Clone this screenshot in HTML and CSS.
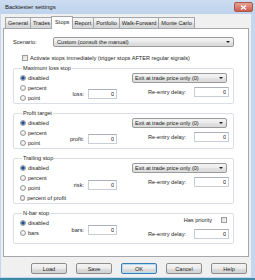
FILE: index.html
```html
<!DOCTYPE html>
<html lang="en">
<head>
    <meta charset="UTF-8">
    <meta name="viewport" content="width=device-width, initial-scale=1.0">
    <title>Backtester settings</title>
    <link rel="stylesheet" href="styles.css">
</head>
<body>
    <div class="window">
        <div class="titlebar">
            <span class="title">Backtester settings</span>
            <span class="close">
                <svg width="7" height="5" viewBox="0 0 7 5"><path d="M1 0.5 L6 4.5 M6 0.5 L1 4.5" stroke="#fff" stroke-width="1.3"/></svg>
            </span>
        </div>

        <div class="client">
            <div class="tabs">
                <span class="tab">General</span>
                <span class="tab">Trades</span>
                <span class="tab active">Stops</span>
                <span class="tab">Report</span>
                <span class="tab">Portfolio</span>
                <span class="tab">Walk-Forward</span>
                <span class="tab">Monte Carlo</span>
            </div>

            <div class="panel">
                <div class="scenario">
                    <label>Scenario:</label>
                    <div class="combo long"><span>Custom (consult the manual)</span><i class="arrow"></i></div>
                </div>

                <label class="check first"><input type="checkbox"> Activate stops immediately (trigger stops AFTER regular signals)</label>

                <!-- maximum loss -->
                <fieldset class="group">
                    <legend>Maximum loss stop</legend>
                    <div class="opts">
                        <label class="radio"><input type="radio" name="loss" checked>disabled</label>
                        <label class="radio"><input type="radio" name="loss">percent</label>
                        <label class="radio"><input type="radio" name="loss">point</label>
                    </div>
                    <div class="amount"><span>loss:</span><input class="num" value="0"></div>
                    <div class="side">
                        <div class="combo"><span>Exit at trade price only (0)</span><i class="arrow"></i></div>
                        <div class="delay"><span>Re-entry delay:</span><input class="num delay-box" value="0"></div>
                    </div>
                </fieldset>

                <!-- profit target -->
                <fieldset class="group">
                    <legend>Profit target</legend>
                    <div class="opts">
                        <label class="radio"><input type="radio" name="profit" checked>disabled</label>
                        <label class="radio"><input type="radio" name="profit">percent</label>
                        <label class="radio"><input type="radio" name="profit">point</label>
                    </div>
                    <div class="amount"><span>profit:</span><input class="num" value="0"></div>
                    <div class="side">
                        <div class="combo"><span>Exit at trade price only (0)</span><i class="arrow"></i></div>
                        <div class="delay"><span>Re-entry delay:</span><input class="num delay-box" value="0"></div>
                    </div>
                </fieldset>

                <!-- trailing -->
                <fieldset class="group">
                    <legend>Trailing stop</legend>
                    <div class="opts">
                        <label class="radio"><input type="radio" name="trail" checked>disabled</label>
                        <label class="radio"><input type="radio" name="trail">percent</label>
                        <label class="radio"><input type="radio" name="trail">point</label>
                        <label class="radio"><input type="radio" name="trail">percent of profit</label>
                    </div>
                    <div class="amount trail"><span>risk:</span><input class="num" value="0"></div>
                    <div class="side">
                        <div class="combo"><span>Exit at trade price only (0)</span><i class="arrow"></i></div>
                        <div class="delay"><span>Re-entry delay:</span><input class="num delay-box" value="0"></div>
                    </div>
                </fieldset>

                <!-- n-bar -->
                <fieldset class="group nbar">
                    <legend>N-bar stop</legend>
                    <div class="opts">
                        <label class="radio"><input type="radio" name="nbar" checked>disabled</label>
                        <label class="radio"><input type="radio" name="nbar">bars</label>
                    </div>
                    <div class="amount"><span>bars:</span><input class="num" value="0"></div>
                    <div class="side">
                        <label class="check priority">Has priority <input type="checkbox"></label>
                        <div class="delay"><span>Re-entry delay:</span><input class="num delay-box" value="0"></div>
                    </div>
                </fieldset>
            </div>

            <div class="buttons">
                <button>Load</button>
                <button>Save</button>
                <button class="default">OK</button>
                <button>Cancel</button>
                <button>Help</button>
            </div>
        </div>
    </div>
</body>
</html>
```

FILE: styles.css
```css
body{
    margin: 0;
    width: 255px;
    height: 280px;
    overflow: hidden;
    background: #c4d7ef;
    font-family: "Liberation Sans", Arial, sans-serif;
    font-size: 5.6px;
    color: #1e1e1e;
}
.window{
    height: 280px;
    border-bottom: 2px solid #3d8aa8;
    box-sizing: border-box;
}
.titlebar{
    height: 14px;
    display: flex;
    align-items: center;
    justify-content: space-between;
    padding: 0 2px 0 5px;
    background: linear-gradient(#cddcf0, #bed3ec);
}
.title{
    font-size: 6px;
    color: #1a1a1a;
}
.close{
    width: 17px;
    height: 8px;
    display: flex;
    align-items: center;
    justify-content: center;
    border: 1px solid #a9574e;
    border-radius: 2px;
    background: linear-gradient(#e6a195, #cf5d50);
}
.close svg{
    display: block;
}
.client{
    margin: 0 4px 0 1px;
    height: 263px;
    background: #f0f0f0;
    padding: 0 2px;
    box-sizing: border-box;
}
.tabs{
    height: 14px;
    display: flex;
    align-items: flex-end;
    padding-left: 3px;
}
.tab{
    height: 11px;
    line-height: 10px;
    padding: 0 2px;
    box-sizing: border-box;
    border: 1px solid #a3a6ab;
    border-bottom: none;
    border-radius: 1px 1px 0 0;
    margin-left: -1px;
    background: linear-gradient(#f6f6f6, #e9e9e9 50%, #dedede 50%, #d6d6d6);
}
.tab.active{
    height: 13px;
    line-height: 11px;
    margin: 0 -1px -1px -2px;
    padding: 0 3px;
    background: #fff;
    position: relative;
    z-index: 1;
}
.panel{
    height: 229px;
    box-sizing: border-box;
    border: 1px solid #a3a6ab;
    background: #fff;
    padding: 8px 14px 0 9px;
}
.scenario{
    display: flex;
    align-items: center;
    height: 10px;
}
.scenario label{
    width: 40px;
}
.combo{
    height: 10px;
    box-sizing: border-box;
    display: flex;
    align-items: center;
    padding: 0 3px 0 2px;
    border: 1px solid #9a9a9a;
    border-radius: 2px;
    background: linear-gradient(#f4f4f4, #ececec 50%, #e2e2e2 50%, #dadada);
}
.combo span{
    flex: 1;
    white-space: nowrap;
}
.combo.long{
    flex: 1;
    padding-left: 3px;
}
.arrow{
    width: 0;
    height: 0;
    border-left: 2px solid transparent;
    border-right: 2px solid transparent;
    border-top: 2px solid #222;
}
.check{
    display: flex;
    align-items: center;
    height: 10px;
    white-space: nowrap;
}
.check.first{
    margin: 6px 0 0 9px;
}
input[type=checkbox]{
    appearance: none;
    width: 6px;
    height: 6px;
    margin: 0 2px 0 0;
    border: 1px solid #9a9a9a;
    background: linear-gradient(135deg, #dcdcdc, #f8f8f8);
}
.group{
    display: flex;
    margin: 0;
    padding: 1px 4px 0 6px;
    border: 1px solid #d9dfe5;
    border-radius: 2px;
    min-width: 0;
}
.group + .group{
    margin-top: 5px;
}
.first + .group{
    margin-top: 1px;
}
.group legend{
    line-height: 8px;
    padding: 0 1px;
    margin-left: 2px;
}
.opts{
    width: 46px;
    display: flex;
    flex-direction: column;
}
.radio{
    display: flex;
    align-items: center;
    height: 10px;
    white-space: nowrap;
}
input[type=radio]{
    appearance: none;
    width: 6px;
    height: 6px;
    margin: 0 2px 0 0;
    border: 1px solid #989a9c;
    border-radius: 50%;
    background: radial-gradient(circle at 50% 40%, #fff, #d8d8d8);
    box-sizing: border-box;
}
input[type=radio]:checked{
    background: radial-gradient(circle, #1c4f92 0 1.3px, #7fa8d6 1.8px, #e4eef9 3px);
}
.amount{
    display: flex;
    align-items: center;
    align-self: flex-end;
    margin-bottom: 4px;
}
.amount span{
    width: 18px;
    text-align: right;
    margin-right: 4px;
}
.amount.trail{
    margin-bottom: 13px;
}
.num{
    width: 29px;
    height: 10px;
    box-sizing: border-box;
    margin: 0;
    padding: 0 2px;
    border: 1px solid #c9ced6;
    border-top-color: #acb0b8;
    font-family: inherit;
    font-size: 5.6px;
    text-align: right;
    color: #1e1e1e;
    background: #fff;
}
.side{
    margin-left: auto;
    width: 97px;
    display: flex;
    flex-direction: column;
}
.side .combo{
    width: 95px;
}
.delay{
    display: flex;
    align-items: center;
    justify-content: flex-end;
    margin-top: 4px;
}
.delay span{
    margin-right: 8px;
}
.delay-box{
    width: 35px;
}
.nbar{
    padding-bottom: 4px;
}
.nbar .side{
    margin-top: -3px;
}
.priority{
    justify-content: flex-end;
    padding-right: 2px;
}
.priority input{
    margin: 0 0 0 9px;
}
.buttons{
    display: flex;
    justify-content: flex-end;
    gap: 9px;
    padding: 6px 2px 0 0;
}
button{
    width: 36px;
    height: 11px;
    padding: 0;
    font-family: inherit;
    font-size: 5.6px;
    color: #1e1e1e;
    border: 1px solid #8d8d8d;
    border-radius: 2px;
    background: linear-gradient(#f4f4f4, #ebebeb 50%, #dddddd 50%, #d2d2d2);
}
button.default{
    border-color: #3c7fb1;
    box-shadow: inset 0 0 0 1px #b5dbf5;
}
```
